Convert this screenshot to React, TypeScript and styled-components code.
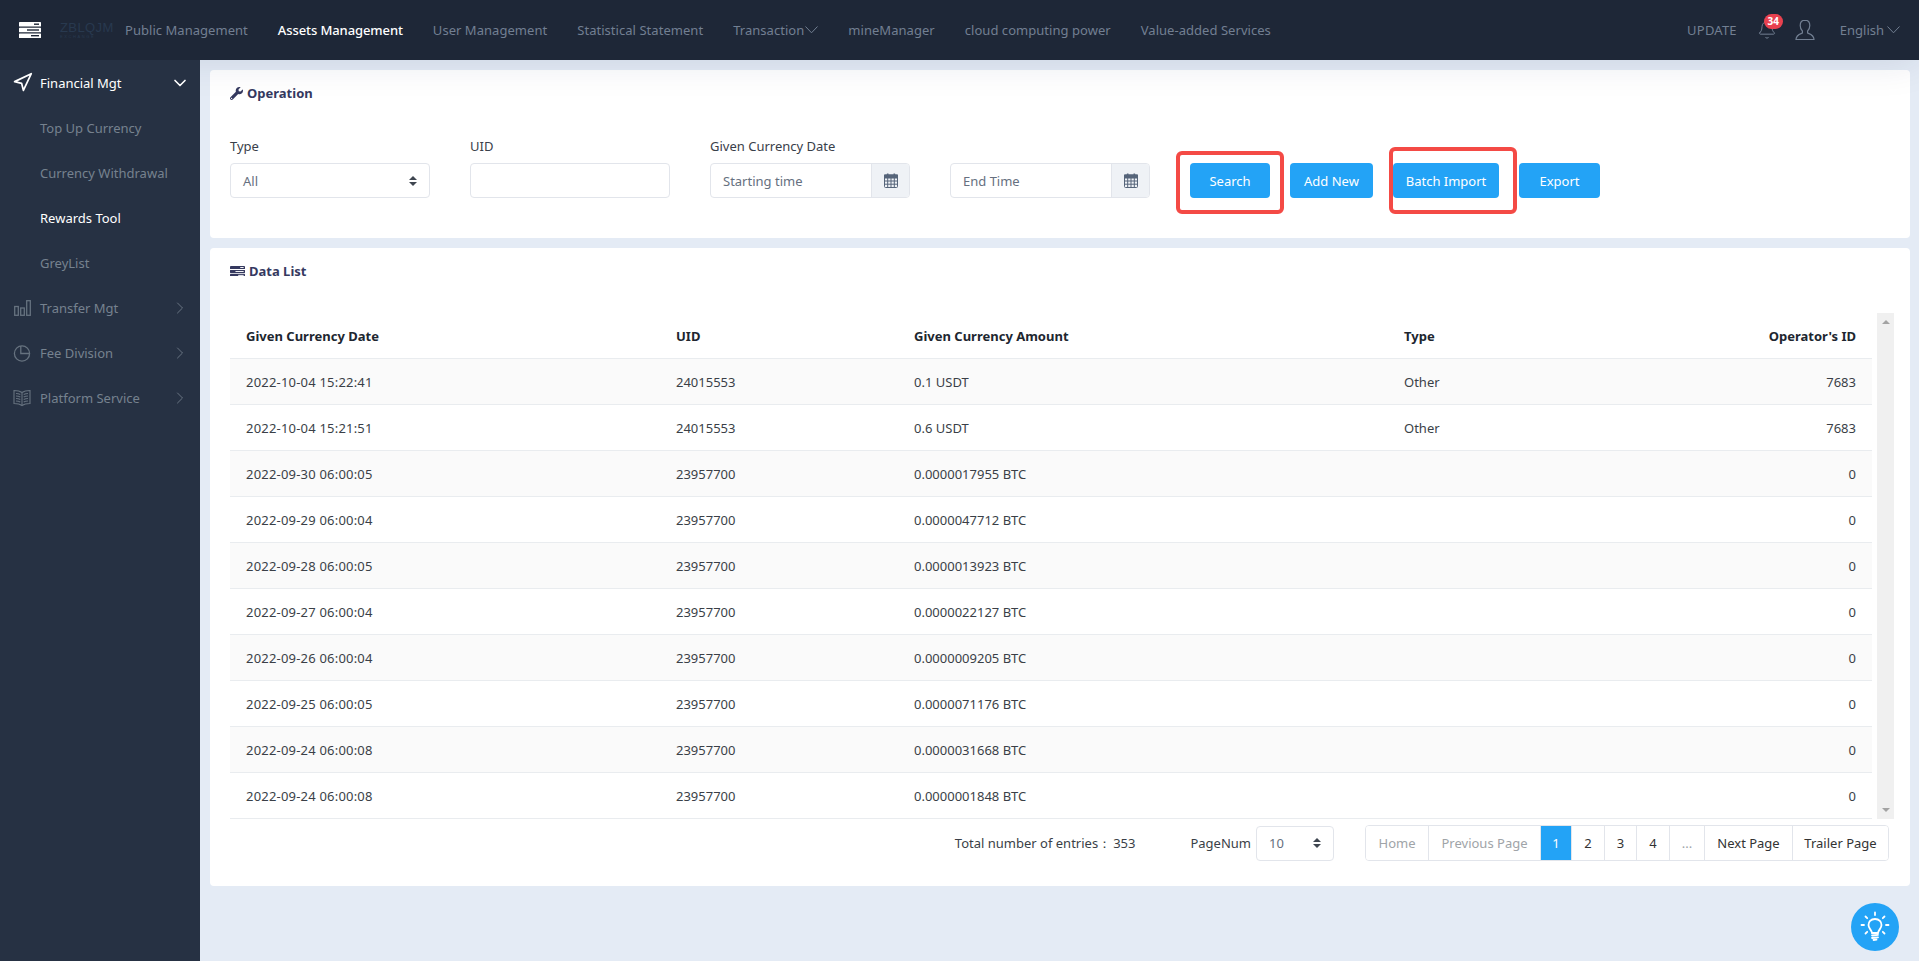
import React from 'react';
import styled, { createGlobalStyle } from 'styled-components';
import { Bell, ChevronDown, ChevronRight, Navigation } from 'lucide-react';
import { FaWrench } from 'react-icons/fa';

const GlobalStyle = createGlobalStyle`
    html, body {
        margin: 0;
        padding: 0;
        background: #e4ebf5;
    }
    body {
        font-family: 'Noto Sans', 'Open Sans', sans-serif;
        font-size: 13px;
        color: #333;
    }
    * {
        box-sizing: border-box;
    }
`;

const Page = styled.div`
    height: 961px;
    overflow: hidden;
    display: flex;
    flex-direction: column;
    position: relative;
`;

const TopBar = styled.header`
    height: 60px;
    flex: none;
    display: flex;
    align-items: center;
    background: #1e2737;
    box-shadow: 0 0 40px rgba(20, 30, 70, 0.12);
    position: relative;
    z-index: 2;
`;

const BurgerWrap = styled.div`
    width: 60px;
    padding-left: 19px;
    display: flex;
    color: #fff;
`;

const Logo = styled.div`
    width: 65px;
    display: flex;
    flex-direction: column;
    color: #28394f;
    font-family: 'Liberation Sans', sans-serif;
    font-size: 13px;
    line-height: 13px;
    letter-spacing: 0.4px;
    small {
        font-size: 4px;
        line-height: 5px;
        letter-spacing: 1.6px;
    }
`;

const Nav = styled.nav`
    display: flex;
    align-items: center;
    gap: 30px;
    flex: 1;
    letter-spacing: 0.04px;
`;

const NavItem = styled.a<{ $active?: boolean }>`
    display: flex;
    align-items: center;
    gap: 1px;
    font-size: 13px;
    color: ${({ $active }) => ($active ? '#fff' : '#727f92')};
    font-weight: ${({ $active }) => ($active ? 500 : 400)};
    letter-spacing: ${({ $active }) => ($active ? '-0.1px' : 'inherit')};
    white-space: nowrap;
`;

const TopRight = styled.div`
    display: flex;
    align-items: center;
    padding-right: 19px;
    color: #727f92;
    font-size: 13px;
`;

const UpdateLink = styled.span`
    letter-spacing: 0.2px;
`;

const BellWrap = styled.div`
    position: relative;
    display: flex;
    margin-left: 20px;
    margin-right: 18px;
`;

const Badge = styled.span`
    position: absolute;
    left: 7px;
    top: -6px;
    width: 19px;
    height: 15px;
    border-radius: 8px;
    background: #e8414f;
    color: #fff;
    font-size: 10px;
    font-weight: 700;
    line-height: 15px;
    text-align: center;
`;

const Language = styled.div`
    display: flex;
    align-items: center;
    gap: 3px;
    margin-left: 25px;
`;

const Body = styled.div`
    flex: 1;
    display: flex;
    min-height: 0;
`;

const Sidebar = styled.aside`
    width: 200px;
    flex: none;
    background: #263143;
    position: relative;
    z-index: 3;
`;

const MenuRow = styled.div<{ $open?: boolean }>`
    height: 45px;
    display: flex;
    align-items: center;
    padding: 0 13px;
    gap: 9px;
    color: ${({ $open }) => ($open ? '#fff' : '#76828f')};
    font-size: 13px;
    span {
        flex: 1;
    }
`;

const MenuIcon = styled.i`
    width: 18px;
    height: 18px;
    flex: none;
    display: flex;
    align-items: center;
    justify-content: center;
    overflow: visible;
    svg {
        flex: none;
    }
`;

const MenuArrow = styled.i`
    display: flex;
    margin-right: -3px;
`;

const SubItem = styled.div<{ $active?: boolean }>`
    height: 45px;
    display: flex;
    align-items: center;
    padding-left: 40px;
    color: ${({ $active }) => ($active ? '#fff' : '#76828f')};
    font-size: 13px;
`;

const Main = styled.main`
    flex: 1;
    min-width: 0;
    padding: 10px 9px 0 10px;
    display: flex;
    flex-direction: column;
    gap: 10px;
`;

const Card = styled.section`
    background: #fff;
    border-radius: 4px;
    padding: 13px 16px 25px 20px;
`;

const CardTitle = styled.h4`
    margin: 0;
    display: flex;
    align-items: center;
    gap: 4px;
    height: 20px;
    font-size: 13px;
    line-height: 20px;
    font-weight: 700;
    color: #35395f;
`;

const FilterRow = styled.div`
    display: flex;
    align-items: flex-end;
    margin-top: 33px;
    padding-bottom: 15px;
`;

const Field = styled.div`
    width: 200px;
    margin-right: 40px;
`;

const FieldLabel = styled.div`
    height: 20px;
    line-height: 20px;
    margin-bottom: 7px;
    color: #39404a;
    white-space: nowrap;
`;

const ControlBox = styled.div<{ $width?: number }>`
    height: 35px;
    width: ${({ $width }) => ($width ? `${$width}px` : '100%')};
    display: flex;
    align-items: center;
    border: 1px solid #e2e5eb;
    border-radius: 4px;
    background: #fff;
    color: #667080;
    overflow: hidden;
`;

const ControlText = styled.span`
    flex: 1;
    padding-left: 12px;
`;

const Addon = styled.span`
    width: 38px;
    height: 100%;
    display: flex;
    align-items: center;
    justify-content: center;
    background: #eff2f6;
    border-left: 1px solid #e2e5eb;
`;

const SortArrows = styled.span`
    display: flex;
    flex-direction: column;
    gap: 2px;
    margin-right: 12px;
    &::before,
    &::after {
        content: '';
        width: 0;
        height: 0;
        border-left: 4px solid transparent;
        border-right: 4px solid transparent;
    }
    &::before {
        border-bottom: 4px solid #3f4650;
    }
    &::after {
        border-top: 4px solid #3f4650;
    }
`;

const ButtonSlot = styled.div`
    position: relative;
    margin-right: 20px;
`;

const Button = styled.button<{ $width: number }>`
    display: block;
    width: ${({ $width }) => $width}px;
    height: 35px;
    border: none;
    border-radius: 4px;
    background: #23a3f6;
    color: #fff;
    font-family: inherit;
    font-size: 13px;
    padding: 0;
`;

const Highlight = styled.div<{ $l: number; $r: number; $t: number; $b: number }>`
    position: absolute;
    left: ${({ $l }) => $l}px;
    right: ${({ $r }) => $r}px;
    top: ${({ $t }) => $t}px;
    bottom: ${({ $b }) => $b}px;
    border: 4px solid #f44a45;
    border-radius: 6px;
    pointer-events: none;
`;

const ListWrap = styled.div`
    display: flex;
    margin-top: 32px;
    gap: 5px;
`;

const Table = styled.table`
    flex: 1;
    min-width: 0;
    border-collapse: separate;
    border-spacing: 0;
    table-layout: fixed;
    color: #3a3f47;
    th {
        height: 46px;
        padding: 0 16px;
        text-align: left;
        font-weight: 700;
        color: #20262f;
        border-bottom: 1px solid #e9ecef;
    }
    td {
        height: 46px;
        padding: 0 16px;
        border-bottom: 1px solid #e9ecef;
    }
    td:first-child {
        letter-spacing: 0.2px;
    }
    tbody tr:nth-child(odd) {
        background: #fafafa;
    }
    th:last-child,
    td:last-child {
        text-align: right;
    }
`;

const Scrollbar = styled.div`
    width: 17px;
    flex: none;
    background: #f0f0f0;
    display: flex;
    flex-direction: column;
    align-items: center;
    justify-content: space-between;
    padding: 7px 0;
    &::before,
    &::after {
        content: '';
        width: 0;
        height: 0;
        border-left: 4px solid transparent;
        border-right: 4px solid transparent;
    }
    &::before {
        border-bottom: 4px solid #a3a3a3;
    }
    &::after {
        border-top: 4px solid #a3a3a3;
    }
`;

const Footer = styled.div`
    display: flex;
    align-items: center;
    justify-content: flex-end;
    margin-top: 6px;
    padding-right: 5px;
    height: 36px;
    color: #3a3f47;
`;

const Total = styled.div`
    margin-right: 55px;
    b {
        font-weight: 400;
        margin-left: 2px;
    }
`;

const PageNum = styled.div`
    display: flex;
    align-items: center;
    gap: 5px;
    margin-right: 31px;
`;

const Pager = styled.div`
    display: flex;
    height: 36px;
    border: 1px solid #e2e5eb;
    border-radius: 4px;
    overflow: hidden;
    background: #fff;
`;

const PageLink = styled.a<{ $width: number; $active?: boolean; $muted?: boolean }>`
    width: ${({ $width }) => $width}px;
    display: flex;
    align-items: center;
    justify-content: center;
    background: ${({ $active }) => ($active ? '#23a3f6' : '#fff')};
    color: ${({ $active, $muted }) => ($active ? '#fff' : $muted ? '#a0a4a8' : '#333')};
    border-right: 1px solid #e2e5eb;
    &:last-child {
        border-right: none;
    }
`;

const HelpButton = styled.div`
    position: absolute;
    right: 20px;
    bottom: 10px;
    width: 48px;
    height: 48px;
    border-radius: 50%;
    background: #23a3f6;
    display: flex;
    align-items: center;
    justify-content: center;
`;

const StackIcon = ({ size = 22, color = '#fff', hole = '#1e2737' }: { size?: number; color?: string; hole?: string }) => (
    <svg width={size} height={(size * 16) / 22} viewBox="0 0 22 16">
        <rect x="0" y="0" width="22" height="4.5" rx="0.6" fill={color} />
        <rect x="0" y="5.8" width="22" height="4.5" rx="0.6" fill={color} />
        <rect x="0" y="11.5" width="22" height="4.5" rx="0.6" fill={color} />
        <rect x="15" y="1.5" width="5" height="1.4" fill={hole} />
        <rect x="8" y="7.3" width="12" height="1.4" fill={hole} />
        <rect x="12" y="13" width="8" height="1.4" fill={hole} />
    </svg>
);

const ThinChevron = () => (
    <svg width="13" height="8" viewBox="0 0 13 8" fill="none" stroke="currentColor" strokeWidth="1">
        <polyline points="0.5,0.5 6.5,6.8 12.5,0.5" />
    </svg>
);

const BarsIcon = () => (
    <svg width="17" height="16" viewBox="0 0 17 16" fill="none" stroke="#66727f" strokeWidth="1.3">
        <rect x="0.7" y="6.5" width="3.6" height="8.8" />
        <rect x="6.7" y="8" width="3.6" height="7.3" />
        <rect x="12.7" y="0.7" width="3.6" height="14.6" />
    </svg>
);

const PieIcon = () => (
    <svg width="18" height="18" viewBox="0 0 18 18" fill="none" stroke="#66727f" strokeWidth="1.3">
        <circle cx="9" cy="9.5" r="7.6" />
        <path d="M7.8 1.9 V9.5 H16.6" />
    </svg>
);

const BookIcon = () => (
    <svg width="18" height="18" viewBox="0 0 18 18" fill="none" stroke="#66727f" strokeWidth="1.1">
        <path d="M9 3.5 C7 2 4 1.5 1 1.5 V14.5 C4 14.5 7 15 9 16.5 C11 15 14 14.5 17 14.5 V1.5 C14 1.5 11 2 9 3.5 Z" />
        <path d="M9 3.5 V16.5" />
        <path d="M3 4.5 C4.5 4.5 6 4.8 7.3 5.5 M3 7 C4.5 7 6 7.3 7.3 8 M3 9.5 C4.5 9.5 6 9.8 7.3 10.5 M3 12 C4.5 12 6 12.3 7.3 13" />
        <path d="M15 4.5 C13.5 4.5 12 4.8 10.7 5.5 M15 7 C13.5 7 12 7.3 10.7 8 M15 9.5 C13.5 9.5 12 9.8 10.7 10.5 M15 12 C13.5 12 12 12.3 10.7 13" />
    </svg>
);

const CalendarIcon = () => (
    <svg width="14" height="15" viewBox="0 0 14 15" fill="none" stroke="#56657a" strokeWidth="1">
        <rect x="0.5" y="2" width="13" height="12.5" rx="1" />
        <rect x="0.5" y="2" width="13" height="3" fill="#56657a" />
        <path d="M3.7 0.5 V3.5 M10.3 0.5 V3.5" strokeWidth="1.6" />
        <path d="M0.5 8 H13.5 M0.5 11.2 H13.5 M3.7 5 V14.5 M7 5 V14.5 M10.3 5 V14.5" />
    </svg>
);

const UserIcon = () => (
    <svg width="20" height="22" viewBox="0 0 20 22" fill="none" stroke="#727f92" strokeWidth="1.2">
        <path d="M10 1.2 C6.8 1.2 5.2 3.6 5.2 6.6 C5.2 9 6.2 11 7.4 12 L7.4 14 C5 15 1 16 1 20.5 L19 20.5 C19 16 15 15 12.6 14 L12.6 12 C13.8 11 14.8 9 14.8 6.6 C14.8 3.6 13.2 1.2 10 1.2 Z" />
    </svg>
);

const BulbIcon = () => (
    <svg width="30" height="32" viewBox="0 0 30 32" fill="none" stroke="#fff" strokeWidth="1.8" strokeLinecap="round">
        <path d="M15 8 C10.6 8 8.5 11.2 8.5 14 C8.5 17.5 11.6 18.8 12 22 L18 22 C18.4 18.8 21.5 17.5 21.5 14 C21.5 11.2 19.4 8 15 8 Z" />
        <path d="M12 24.5 L18 23.8 M12 27 L18 26.3 M13.5 29 L16.5 28.6" />
        <path d="M15 1.5 V4 M5.5 5.5 L7.2 7.2 M24.5 5.5 L22.8 7.2 M1.5 14 H4 M26 14 H28.5 M5.5 22.5 L7.2 20.8 M24.5 22.5 L22.8 20.8" />
    </svg>
);

const rows = [
    ['2022-10-04 15:22:41', '24015553', '0.1 USDT', 'Other', '7683'],
    ['2022-10-04 15:21:51', '24015553', '0.6 USDT', 'Other', '7683'],
    ['2022-09-30 06:00:05', '23957700', '0.0000017955 BTC', '', '0'],
    ['2022-09-29 06:00:04', '23957700', '0.0000047712 BTC', '', '0'],
    ['2022-09-28 06:00:05', '23957700', '0.0000013923 BTC', '', '0'],
    ['2022-09-27 06:00:04', '23957700', '0.0000022127 BTC', '', '0'],
    ['2022-09-26 06:00:04', '23957700', '0.0000009205 BTC', '', '0'],
    ['2022-09-25 06:00:05', '23957700', '0.0000071176 BTC', '', '0'],
    ['2022-09-24 06:00:08', '23957700', '0.0000031668 BTC', '', '0'],
    ['2022-09-24 06:00:08', '23957700', '0.0000001848 BTC', '', '0'],
];

const navItems = ['Public Management', 'Assets Management', 'User Management', 'Statistical Statement'];
const navItemsAfter = ['mineManager', 'cloud computing power', 'Value-added Services'];

const pages = [
    { label: 'Home', width: 63, muted: true },
    { label: 'Previous Page', width: 112, muted: true },
    { label: '1', width: 31, active: true },
    { label: '2', width: 33 },
    { label: '3', width: 32 },
    { label: '4', width: 33 },
    { label: '...', width: 35, muted: true },
    { label: 'Next Page', width: 88 },
    { label: 'Trailer Page', width: 95 },
];

export default function App() {
    return (
        <Page>
            <GlobalStyle />
            <TopBar>
                <BurgerWrap>
                    <StackIcon />
                </BurgerWrap>
                <Logo>
                    ZBLQJM
                    <small>EXCHANGE</small>
                </Logo>
                <Nav>
                    {navItems.map((item) => (
                        <NavItem key={item} $active={item === 'Assets Management'}>
                            {item}
                        </NavItem>
                    ))}
                    <NavItem>
                        Transaction
                        <ThinChevron />
                    </NavItem>
                    {navItemsAfter.map((item) => (
                        <NavItem key={item}>{item}</NavItem>
                    ))}
                </Nav>
                <TopRight>
                    <UpdateLink>UPDATE</UpdateLink>
                    <BellWrap>
                        <Bell size={20} strokeWidth={1.2} />
                        <Badge>34</Badge>
                    </BellWrap>
                    <UserIcon />
                    <Language>
                        English
                        <ThinChevron />
                    </Language>
                </TopRight>
            </TopBar>
            <Body>
                <Sidebar>
                    <MenuRow $open>
                        <MenuIcon>
                            <Navigation size={21} strokeWidth={2} />
                        </MenuIcon>
                        <span>Financial Mgt</span>
                        <MenuArrow>
                            <ChevronDown size={20} strokeWidth={2} />
                        </MenuArrow>
                    </MenuRow>
                    <SubItem>Top Up Currency</SubItem>
                    <SubItem>Currency Withdrawal</SubItem>
                    <SubItem $active>Rewards Tool</SubItem>
                    <SubItem>GreyList</SubItem>
                    <MenuRow>
                        <MenuIcon>
                            <BarsIcon />
                        </MenuIcon>
                        <span>Transfer Mgt</span>
                        <MenuArrow>
                            <ChevronRight size={20} strokeWidth={1} />
                        </MenuArrow>
                    </MenuRow>
                    <MenuRow>
                        <MenuIcon>
                            <PieIcon />
                        </MenuIcon>
                        <span>Fee Division</span>
                        <MenuArrow>
                            <ChevronRight size={20} strokeWidth={1} />
                        </MenuArrow>
                    </MenuRow>
                    <MenuRow>
                        <MenuIcon>
                            <BookIcon />
                        </MenuIcon>
                        <span>Platform Service</span>
                        <MenuArrow>
                            <ChevronRight size={20} strokeWidth={1} />
                        </MenuArrow>
                    </MenuRow>
                </Sidebar>
                <Main>
                    <Card>
                        <CardTitle>
                            <FaWrench size={13} />
                            Operation
                        </CardTitle>
                        <FilterRow>
                            <Field>
                                <FieldLabel>Type</FieldLabel>
                                <ControlBox>
                                    <ControlText>All</ControlText>
                                    <SortArrows />
                                </ControlBox>
                            </Field>
                            <Field>
                                <FieldLabel>UID</FieldLabel>
                                <ControlBox />
                            </Field>
                            <Field>
                                <FieldLabel>Given Currency Date</FieldLabel>
                                <ControlBox>
                                    <ControlText>Starting time</ControlText>
                                    <Addon>
                                        <CalendarIcon />
                                    </Addon>
                                </ControlBox>
                            </Field>
                            <Field>
                                <FieldLabel />
                                <ControlBox>
                                    <ControlText>End Time</ControlText>
                                    <Addon>
                                        <CalendarIcon />
                                    </Addon>
                                </ControlBox>
                            </Field>
                            <ButtonSlot>
                                <Button $width={80}>Search</Button>
                                <Highlight $l={-14} $r={-14} $t={-12} $b={-16} />
                            </ButtonSlot>
                            <ButtonSlot>
                                <Button $width={83}>Add New</Button>
                            </ButtonSlot>
                            <ButtonSlot>
                                <Button $width={106}>Batch Import</Button>
                                <Highlight $l={-4} $r={-18} $t={-16} $b={-16} />
                            </ButtonSlot>
                            <ButtonSlot>
                                <Button $width={81}>Export</Button>
                            </ButtonSlot>
                        </FilterRow>
                    </Card>
                    <Card>
                        <CardTitle>
                            <StackIcon size={15} color="#35395f" hole="#fff" />
                            Data List
                        </CardTitle>
                        <ListWrap>
                            <Table>
                                <colgroup>
                                    <col style={{ width: 430 }} />
                                    <col style={{ width: 238 }} />
                                    <col style={{ width: 490 }} />
                                    <col style={{ width: 240 }} />
                                    <col />
                                </colgroup>
                                <thead>
                                    <tr>
                                        <th>Given Currency Date</th>
                                        <th>UID</th>
                                        <th>Given Currency Amount</th>
                                        <th>Type</th>
                                        <th>Operator's ID</th>
                                    </tr>
                                </thead>
                                <tbody>
                                    {rows.map((row, i) => (
                                        <tr key={i}>
                                            {row.map((cell, j) => (
                                                <td key={j}>{cell}</td>
                                            ))}
                                        </tr>
                                    ))}
                                </tbody>
                            </Table>
                            <Scrollbar />
                        </ListWrap>
                        <Footer>
                            <Total>
                                Total number of entries：<b>353</b>
                            </Total>
                            <PageNum>
                                PageNum
                                <ControlBox $width={78}>
                                    <ControlText>10</ControlText>
                                    <SortArrows />
                                </ControlBox>
                            </PageNum>
                            <Pager>
                                {pages.map((page) => (
                                    <PageLink
                                        key={page.label}
                                        $width={page.width}
                                        $active={page.active}
                                        $muted={page.muted}
                                    >
                                        {page.label}
                                    </PageLink>
                                ))}
                            </Pager>
                        </Footer>
                    </Card>
                </Main>
            </Body>
            <HelpButton>
                <BulbIcon />
            </HelpButton>
        </Page>
    );
}
